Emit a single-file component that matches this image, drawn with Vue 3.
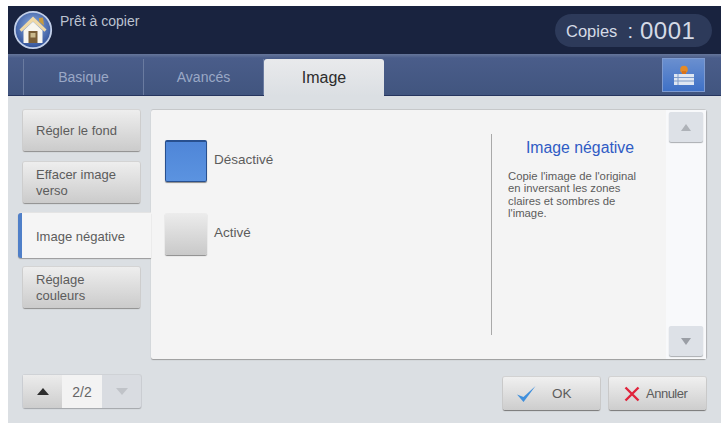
<script setup>
const menu = [
  { label: 'Régler le fond' },
  { label: 'Effacer image verso' },
  { label: 'Image négative', active: true },
  { label: 'Réglage couleurs' },
]

const options = [
  { label: 'Désactivé', on: true },
  { label: 'Activé', on: false },
]
</script>

<template>
  <div class="screen">
    <header class="topbar">
      <div class="home">
        <svg viewBox="0 0 40 40" width="40" height="40">
          <defs>
            <radialGradient id="homeBg" cx="50%" cy="40%" r="60%">
              <stop offset="0" stop-color="#8fb0e4" />
              <stop offset="1" stop-color="#2f4f96" />
            </radialGradient>
          </defs>
          <circle cx="20" cy="20" r="18.2" fill="url(#homeBg)" stroke="#c2cfe8" stroke-width="1.8" />
          <path d="M26 8l4-.5 1 8-5-4z" fill="#c79a3e" />
          <path d="M20 6.5L6.5 19.5l2 2.3L20 11.5l11.5 10.3 2-2.3z" fill="#f0d9a6" />
          <path d="M10.5 20.5L20 11.8l9.5 8.7V33h-19z" fill="#f8f6ef" />
          <rect x="15.5" y="21" width="9" height="12" fill="#7a5f38" />
          <rect x="17.5" y="23" width="5" height="4.5" fill="#c9b98c" />
        </svg>
      </div>
      <span class="status">Prêt à copier</span>
      <div class="copies">
        <span class="copies-label">Copies</span>
        <span class="copies-sep">:</span>
        <span class="copies-num">0001</span>
      </div>
    </header>

    <nav class="tabbar">
      <div class="tab-stub"></div>
      <div class="tab">Basique</div>
      <div class="tab">Avancés</div>
      <div class="tab selected">Image</div>
      <button class="job-btn">
        <svg viewBox="0 0 26 24" width="26" height="24">
          <circle cx="13" cy="6.5" r="3.8" fill="#e58a25" />
          <rect x="11" y="8" width="4" height="5" fill="#d9731a" />
          <rect x="3" y="11" width="20" height="11" fill="#dfe7f2" />
          <path d="M3 14.5h20M3 18h20M7 11v11" stroke="#7f9bc8" stroke-width="1" fill="none" />
        </svg>
      </button>
    </nav>

    <main class="body">
      <aside class="side">
        <div class="menu">
          <div
            v-for="item in menu"
            :key="item.label"
            class="menu-item"
            :class="{ active: item.active }"
          >
            <span>{{ item.label }}</span>
          </div>
        </div>
        <div class="pager">
          <div class="pager-btn up"><i class="tri up-tri dark"></i></div>
          <div class="pager-num">2/2</div>
          <div class="pager-btn down"><i class="tri down-tri faded"></i></div>
        </div>
      </aside>

      <section class="right">
        <div class="panel">
          <div class="options">
            <div v-for="opt in options" :key="opt.label" class="option">
              <div class="check" :class="{ on: opt.on }"></div>
              <span>{{ opt.label }}</span>
            </div>
          </div>
          <div class="info">
            <h3>Image négative</h3>
            <p>Copie l'image de l'original en inversant les zones claires et sombres de l'image.</p>
          </div>
          <div class="scroll">
            <div class="scroll-btn"><i class="tri up-tri grey"></i></div>
            <div class="scroll-btn"><i class="tri down-tri grey"></i></div>
          </div>
        </div>
        <div class="actions">
          <button class="action">
            <svg viewBox="0 0 20 18" width="20" height="18">
              <path d="M1 9.5l6.500 7.500L19.500 1 7.500 12z" fill="#3f8fdc" />
            </svg>
            <span class="ok">OK</span>
          </button>
          <button class="action cancel">
            <svg viewBox="0 0 16 16" width="16" height="16">
              <path d="M1.5 1.5L14.5 14.5M14.5 1.5L1.5 14.5" stroke="#e0243c" stroke-width="2.4" fill="none" />
            </svg>
            <span class="cancel-label">Annuler</span>
          </button>
        </div>
      </section>
    </main>
  </div>
</template>

<style>
html,
body {
  margin: 0;
  background: #fff;
}
</style>

<style scoped>
.screen {
  width: 713px;
  height: 417px;
  margin: 6px 0 0 8px;
  display: flex;
  flex-direction: column;
  font-family: "Liberation Sans", Arial, sans-serif;
  background: #dbdfe3;
  overflow: hidden;
}

.topbar {
  height: 48px;
  flex: none;
  display: flex;
  align-items: flex-start;
  background: #19233f;
}

.home {
  margin: 4px 0 0 5px;
  width: 40px;
  height: 40px;
}

.status {
  margin: 7px 0 0 7px;
  font-size: 14px;
  color: #bcc2d0;
}

.copies {
  margin: 8px 9px 0 auto;
  width: 157px;
  height: 33px;
  box-sizing: border-box;
  padding: 1px 0 0 11px;
  border-radius: 17px;
  background: #2d3a5a;
  color: #d5dae6;
  display: flex;
  align-items: center;
}

.copies-label {
  font-size: 16.5px;
}

.copies-sep {
  margin-left: 10px;
  font-size: 20px;
}

.copies-num {
  margin-left: 7px;
  font-size: 24px;
  letter-spacing: 0.5px;
}

.tabbar {
  height: 42px;
  flex: none;
  display: flex;
  align-items: stretch;
  box-sizing: border-box;
  padding-top: 5px;
  background: linear-gradient(#66769a, #4a5d8a 4px, #41557f);
  border-bottom: 1px solid #26355f;
}

.tab-stub {
  width: 15px;
  border-right: 1px solid #6a7ba0;
}

.tab {
  width: 119px;
  display: flex;
  align-items: center;
  justify-content: center;
  font-size: 14px;
  color: #9aa8c6;
  border-right: 1px solid #6a7ba0;
}

.tab.selected {
  width: 120px;
  margin-bottom: -1px;
  border: none;
  border-radius: 3px 3px 0 0;
  background: linear-gradient(#e9eaec, #dbdfe3);
  color: #2c2c2c;
  font-size: 16px;
}

.job-btn {
  margin: -1px 16px 3px auto;
  width: 43px;
  padding: 0;
  border: 1px solid #7d9ad0;
  background: linear-gradient(#6a8fcf, #3f71c6);
  display: flex;
  align-items: center;
  justify-content: center;
}

.body {
  flex: 1;
  display: flex;
  min-height: 0;
}

.side {
  width: 143px;
  flex: none;
  display: flex;
  flex-direction: column;
}

.menu {
  margin-top: 14px;
  height: 265px;
  display: flex;
  flex-direction: column;
}

.menu-item {
  margin: 0 11px 11px 15px;
  height: 41px;
  flex: none;
  box-sizing: border-box;
  padding: 0 12px 0 13px;
  display: flex;
  align-items: center;
  font-size: 13px;
  line-height: 16px;
  color: #5c5c5c;
  border-radius: 2px;
  background: linear-gradient(#eeeeee, #cbcbcb);
  box-shadow: 0 1px 1px #8e8e8e, 0 0 0 1px #d4d4d4;
}

.menu-item.active {
  margin: -1px 0 9px 10px;
  height: 45px;
  padding-left: 14px;
  padding-top: 3px;
  background: #f5f5f5;
  border-left: 4px solid #4f7fc8;
  border-radius: 3px 0 0 3px;
  box-shadow: 0 1px 1px #9a9a9a, 0 -1px 0 #e4e4e4;
  position: relative;
  z-index: 1;
}

.pager {
  margin-left: 15px;
  width: 118px;
  height: 33px;
  display: flex;
  border-radius: 2px;
  background: #d9dce1;
  box-shadow: 0 1px 1px #a4a7ab, 0 0 0 1px #cfd2d6;
}

.pager-btn {
  flex: 1;
  display: flex;
  align-items: center;
  justify-content: center;
}

.pager-btn.up {
  flex: none;
  width: 39px;
  background: linear-gradient(#ececec, #cdcdcd);
}

.pager-num {
  width: 40px;
  background: #f3f3f3;
  display: flex;
  align-items: center;
  justify-content: center;
  font-size: 14px;
  color: #666;
}

.tri {
  display: block;
  width: 0;
  height: 0;
  border-left: 6px solid transparent;
  border-right: 6px solid transparent;
}

.up-tri {
  border-bottom: 7px solid #777;
}

.down-tri {
  border-top: 7px solid #777;
}

.up-tri.dark {
  border-bottom-color: #2e2e2e;
}

.down-tri.faded {
  border-top-color: #c0c3c8;
}

.tri.grey {
  border-left-width: 5.5px;
  border-right-width: 5.5px;
}

.up-tri.grey {
  border-bottom-color: #aeb2b8;
}

.down-tri.grey {
  border-top-color: #9a9ea5;
}

.right {
  flex: 1;
  min-width: 0;
  display: flex;
  flex-direction: column;
  padding: 14px 15px 0 0;
}

.panel {
  height: 249px;
  flex: none;
  display: flex;
  background: #f4f4f4;
  border-radius: 2px;
  box-shadow: 0 1px 1px #9c9c9c, 1px 0 1px #b4b6b9, 0 -1px 0 #c8cacd;
}

.options {
  width: 340px;
  box-sizing: border-box;
  padding: 30px 0 0 14px;
  display: flex;
  flex-direction: column;
  gap: 31px;
}

.option {
  display: flex;
  align-items: flex-start;
  gap: 7px;
  font-size: 13.5px;
  color: #5c5c5c;
}

.option span {
  margin-top: 12px;
}

.check {
  width: 42px;
  height: 42px;
  box-sizing: border-box;
  border-radius: 2px;
  background: linear-gradient(#ececec, #c9c9c9);
  box-shadow: 0 1px 1px #8a8a8a;
}

.check.on {
  background: linear-gradient(#4f86d8, #5b93e0);
  border: 1px solid #28508f;
  border-width: 2px 1px 1px 1px;
}

.info {
  margin: 24px 0;
  width: 175px;
  box-sizing: border-box;
  padding: 0 14px 0 16px;
  border-left: 1px solid #a9a9a9;
}

.info h3 {
  margin: 5px 0 13px;
  font-size: 15.8px;
  font-weight: normal;
  white-space: nowrap;
  text-align: center;
  color: #2f5bc4;
}

.info p {
  margin: 0;
  max-width: 136px;
  font-size: 11.3px;
  line-height: 12.3px;
  color: #5c5c5c;
}

.scroll {
  width: 34px;
  flex: none;
  margin-left: auto;
  background: #f8f9fb;
  display: flex;
  flex-direction: column;
  justify-content: space-between;
  padding: 2px 3px 3px;
}

.scroll-btn {
  height: 30px;
  background: #dde1e7;
  border-radius: 2px;
  box-shadow: 0 1px 1px #a9acb1;
  display: flex;
  align-items: center;
  justify-content: center;
}

.actions {
  margin-top: 18px;
  display: flex;
  justify-content: flex-end;
  gap: 9px;
}

.action {
  width: 97px;
  height: 33px;
  padding: 0 0 0 13px;
  border: none;
  border-radius: 2px;
  display: flex;
  align-items: center;
  font-family: inherit;
  font-size: 13.5px;
  color: #5c5c5c;
  background: linear-gradient(#f0f0f0, #cdcdcd);
  box-shadow: 0 1px 1px #777, 0 0 0 1px #d2d2d2;
}

.ok {
  margin-left: 16px;
}

.cancel {
  padding-left: 15px;
  gap: 6px;
}

.cancel-label {
  font-size: 13px;
  letter-spacing: -0.5px;
}
</style>
